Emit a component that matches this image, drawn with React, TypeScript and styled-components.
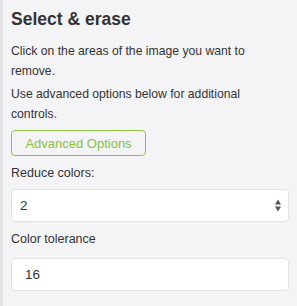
import React from "react";
import styled, { createGlobalStyle } from "styled-components";

const Global = createGlobalStyle`
  html, body { margin: 0; padding: 0; background: #f4f4f6; }
  body { font-family: "Liberation Sans", Arial, sans-serif; color: #333; }
`;

const Page = styled.div`
  display: flex;
  width: 297px;
  height: 306px;
  background: #f4f4f6;
`;

const Stripe = styled.div`
  width: 3px;
  flex: none;
  background: #e3e3e6;
`;

const Panel = styled.div`
  flex: 1;
  display: flex;
  flex-direction: column;
  padding: 8px 8px 0 8px;
`;

const Title = styled.h2`
  margin: 0 0 11px 0;
  font-size: 17.5px;
  line-height: 22px;
  font-weight: bold;
  color: #333;
`;

const Text = styled.p`
  margin: 0 0 3px 0;
  padding-right: 8px;
  font-size: 12.2px;
  line-height: 20px;
  color: #333;
`;

const OutlineButton = styled.button`
  align-self: flex-start;
  margin-top: 3px;
  height: 26px;
  width: 135px;
  padding: 0;
  border: 1px solid #8cc63f;
  border-radius: 4px;
  background: transparent;
  color: #86c441;
  font-family: "Liberation Sans", Arial, sans-serif;
  font-size: 13px;
`;

const Label = styled.label`
  margin-top: 7px;
  font-size: 12.5px;
  line-height: 20px;
  color: #333;
`;

const FieldBox = styled.div<{ $pad: number; $gap: number }>`
  display: flex;
  align-items: center;
  justify-content: space-between;
  height: 33px;
  margin-top: ${(p) => p.$gap}px;
  box-sizing: border-box;
  padding: 0 7px 0 ${(p) => p.$pad}px;
  background: #fff;
  border: 1px solid #e2e2e4;
  border-radius: 4px;
  font-size: 13.5px;
  color: #333;
`;

const Arrows = () => (
  <svg width="6" height="13" viewBox="0 0 6 13">
    <path d="M3 0.5 L6 5.5 H0 Z" fill="#555" />
    <path d="M3 12.5 L6 7.5 H0 Z" fill="#555" />
  </svg>
);

export default function App() {
  return (
    <Page>
      <Global />
      <Stripe />
      <Panel>
        <Title>Select &amp; erase</Title>
        <Text>Click on the areas of the image you want to remove.</Text>
        <Text>Use advanced options below for additional controls.</Text>
        <OutlineButton>Advanced Options</OutlineButton>
        <Label>Reduce colors:</Label>
        <FieldBox $pad={8} $gap={6}>
          <span>2</span>
          <Arrows />
        </FieldBox>
        <Label>Color tolerance</Label>
        <FieldBox $pad={13} $gap={9}>
          <span>16</span>
        </FieldBox>
      </Panel>
    </Page>
  );
}
